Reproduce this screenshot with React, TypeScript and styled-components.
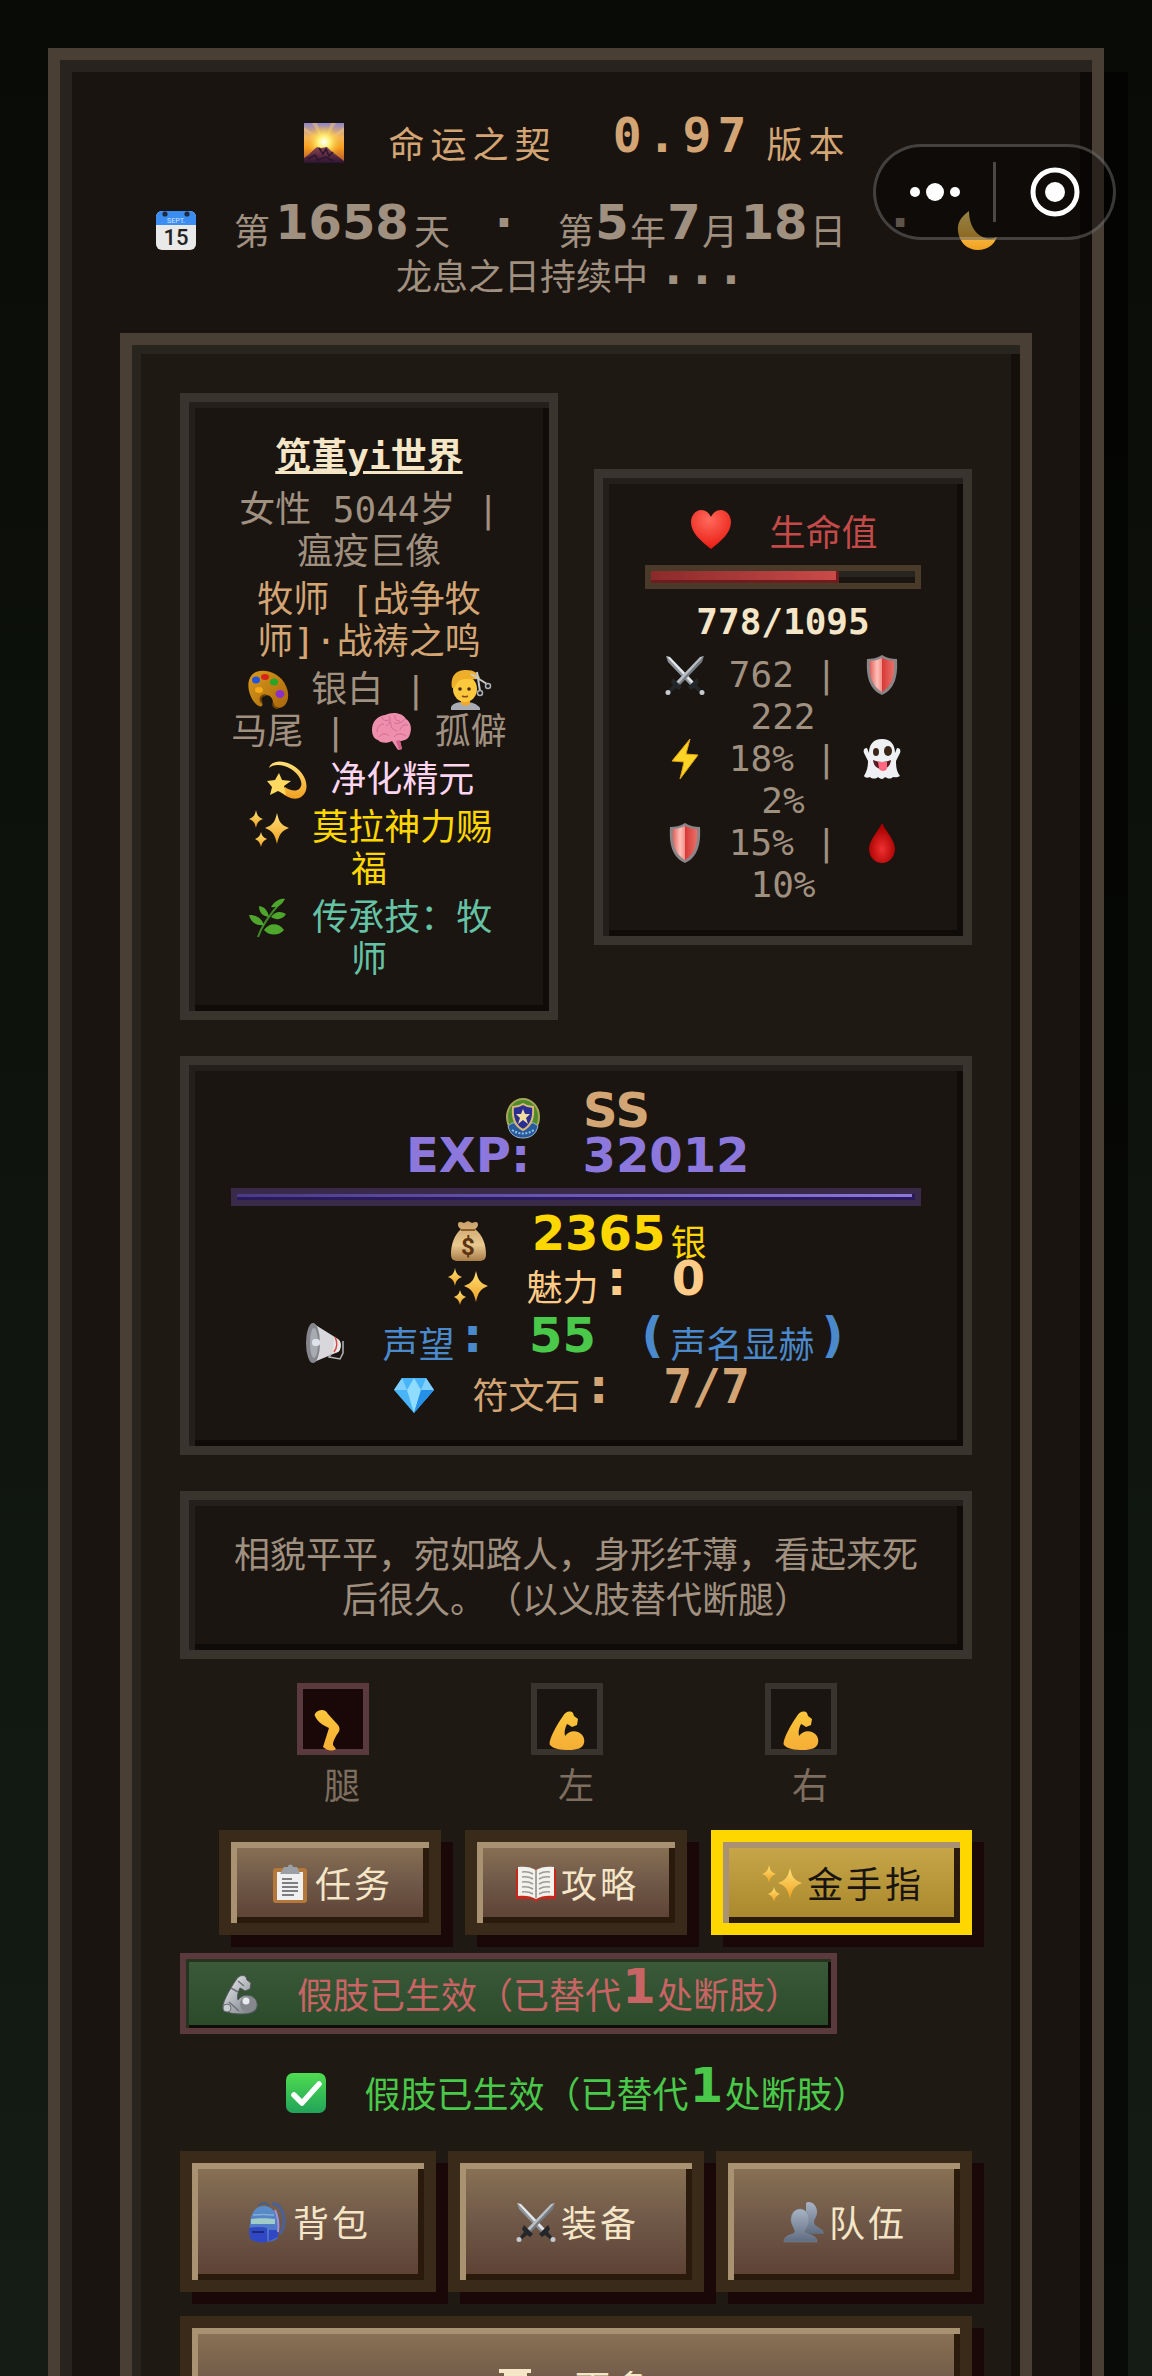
import React from "react";
import styled, { createGlobalStyle } from "styled-components";

const GlobalStyle = createGlobalStyle`
  * { box-sizing: border-box; }
  html, body { margin: 0; background: #0a0d08; }
`;

const CJK = `"Noto Sans CJK SC", "Noto Sans", sans-serif`;
const MONO = `"DejaVu Sans Mono", "Noto Sans CJK SC", monospace`;

/* ---------- frame ---------- */

const Page = styled.div`
  height: 100vh;
  overflow: hidden;
  padding: 48px;
  background: linear-gradient(#090b07, #151c15);
  font-family: ${CJK};
  font-size: 36px;
  line-height: 45px;
  text-spacing-trim: space-all;
`;

const Frame = styled.main`
  border: 12px solid #4a3f35;
  padding: 60px 60px 120px;
  background: #1a1411;
  box-shadow: inset 12px 12px 0 #28231f, inset -12px -12px 0 #0e0a08, 24px 24px 0 rgba(0, 0, 0, 0.6);
`;

const Header = styled.header`
  display: flex;
  flex-direction: column;
  color: #a09080;
  margin-bottom: 36px;
`;

const Title = styled.h1`
  margin: 0 0 42px;
  height: 45px;
  display: flex;
  justify-content: center;
  gap: 42px;
  font-size: 36px;
  font-weight: 400;
  letter-spacing: 6px;
  color: #d4a574;
  white-space: nowrap;
`;

const Panel = styled.section`
  border: 12px solid #4a3f35;
  padding: 48px;
  background: #1e1913;
  box-shadow: inset 9px 9px 0 #28241e, inset -9px -9px 0 #13100b;
`;

const Card = styled.section`
  border: 9px solid #3a342e;
  padding: 30px 42px;
  background: #1a1510;
  box-shadow: inset 6px 6px 0 #241f1a, inset -6px -6px 0 #0e0b08;
`;

const Stack = styled.div`
  display: flex;
  flex-direction: column;
  gap: 36px;
`;

const Pair = styled.div`
  display: grid;
  grid-template-columns: 1fr 1fr;
  gap: 36px;
  align-items: center;
`;

/* ---------- text ---------- */

const Line = styled.div<{ $color?: string; $top?: number }>`
  display: flex;
  justify-content: center;
  gap: 36px;
  height: 45px;
  margin-top: ${(p) => p.$top ?? 0}px;
  color: ${(p) => p.$color ?? "inherit"};
  white-space: nowrap;
`;

const Px = styled.span<{ $cells: number; $cell?: number; $mono?: boolean; $color?: string }>`
  display: inline-block;
  min-width: ${(p) => p.$cells * (p.$cell ?? 36)}px;
  text-align: center;
  vertical-align: 6px;
  font-family: ${(p) => (p.$mono ? `"DejaVu Sans Mono"` : `"DejaVu Sans"`)}, sans-serif;
  font-weight: 700;
  font-size: 48px;
  line-height: 30px;
  color: ${(p) => p.$color ?? "inherit"};
`;

const MonoBlock = styled.div<{ $color?: string; $bold?: boolean }>`
  margin: ${(p) => (p.$bold ? "4px 0 11px" : "6px 0 0")};
  font-family: ${MONO};
  font-weight: ${(p) => (p.$bold ? 700 : 400)};
  line-height: 42px;
  text-align: center;
  white-space: nowrap;
  color: ${(p) => p.$color ?? "#a09080"};
`;

const MonoLine = styled.div`
  height: 42px;
`;

const NameLink = styled.a`
  color: inherit;
  text-decoration: underline;
  text-decoration-thickness: 3px;
`;

const Description = styled.p`
  margin: 0;
  text-align: center;
  color: #a09080;
`;

/* ---------- bars ---------- */

const Track = styled.div<{ $thick: number; $border: string; $top: number; $bottom: number }>`
  height: ${(p) => p.$thick + 12}px;
  margin: ${(p) => p.$top}px 0 ${(p) => p.$bottom}px;
  border: 6px solid ${(p) => p.$border};
  background: linear-gradient(#28241f 50%, #1a1510 50%);
`;

const Fill = styled.div<{ $from: string; $to: string; $edge: string }>`
  height: 100%;
  background: linear-gradient(90deg, ${(p) => p.$from}, ${(p) => p.$to});
  box-shadow: inset -3px -3px 0 ${(p) => p.$edge};
`;

/* ---------- limbs ---------- */

const Limbs = styled.div`
  display: flex;
  justify-content: center;
  gap: 36px;
  margin: 24px 0;
`;

const Limb = styled.div`
  width: 198px;
  display: flex;
  flex-direction: column;
  align-items: center;
  gap: 6px;
  color: #7d6e60;
`;

const LimbBox = styled.div<{ $hurt?: boolean }>`
  width: 72px;
  height: 72px;
  margin-right: 18px;
  padding: 20px 0 0 6px;
  line-height: 0;
  border: 6px solid ${(p) => (p.$hurt ? "#5a3a3c" : "#3a342e")};
  background: ${(p) => (p.$hurt ? "#1a0808" : "#1a1510")};
`;

/* ---------- buttons ---------- */

const Button = styled.button<{ $gold?: boolean; $tall?: boolean }>`
  appearance: none;
  display: flex;
  align-items: center;
  justify-content: center;
  gap: 3px;
  margin: 0;
  padding: ${(p) => (p.$tall ? 36 : 18)}px 36px;
  border: 12px solid ${(p) => (p.$gold ? "#ffd700" : "#3a2a1a")};
  border-radius: 0;
  background: ${(p) => (p.$gold ? "linear-gradient(#c8a84b, #a8872a)" : "linear-gradient(#8b7355, #6f5848 50%, #5c4033)")};
  background-clip: padding-box;
  box-shadow: inset 6px 6px 0 #a99272, inset -6px -6px 0 #2a1a0c, 12px 12px 0 #1a0808;
  font: 400 36px/45px ${CJK};
  letter-spacing: 3px;
  white-space: nowrap;
  color: ${(p) => (p.$gold ? "#1a1410" : "#f5e6c8")};
  cursor: pointer;
`;

const ActionRow = styled.div`
  display: flex;
  justify-content: flex-end;
  gap: 24px;
`;

const MenuGrid = styled.div`
  display: grid;
  grid-template-columns: repeat(3, 1fr);
  gap: 24px 12px;
`;

const Wide = styled.div`
  grid-column: 1 / -1;
  display: grid;
`;

const MoreMark = styled.span`
  margin-right: 36px;
  line-height: 0;
`;

const Banner = styled.div`
  display: flex;
  gap: 36px;
  width: fit-content;
  margin: 18px 0 36px;
  padding: 12px 30px;
  border: 6px solid #5a3a3c;
  background: linear-gradient(#3a5a3a, #2a4a2a);
  box-shadow: inset 3px 3px 0 #28331f, inset -3px -3px 0 #100c08;
  color: #c86464;
  white-space: nowrap;
`;

const Notice = styled(Line)`
  margin-bottom: 36px;
  color: #4ac84a;
`;

/* ---------- capsule ---------- */

const Capsule = styled.nav`
  position: fixed;
  top: 144px;
  right: 36px;
  width: 243px;
  height: 96px;
  display: grid;
  grid-template-columns: 1fr 3px 1fr;
  align-items: center;
  border: 3px solid rgba(255, 255, 255, 0.22);
  border-radius: 48px;
  background: rgba(0, 0, 0, 0.42);
`;

const CapsuleButton = styled.button`
  appearance: none;
  height: 100%;
  padding: 0;
  border: 0;
  background: none;
  display: flex;
  align-items: center;
  justify-content: center;
  cursor: pointer;
`;

const Divider = styled.span`
  height: 60px;
  background: rgba(255, 255, 255, 0.25);
`;

/* ---------- icons ---------- */

const Glyph = styled.svg`
  width: 45px;
  height: 42px;
  flex: none;
  vertical-align: -9px;
`;

const Flex = styled.span`
  display: inline-flex;
  align-items: center;
  height: 45px;
`;

const Defs = () => (
  <svg width="0" height="0" style={{ display: "block" }} aria-hidden="true">
    <defs>
      <linearGradient id="sky" x1="0" y1="0" x2="0" y2="1">
        <stop offset="0" stopColor="#8f86c9" />
        <stop offset=".35" stopColor="#f5b65a" />
        <stop offset=".6" stopColor="#f7a020" />
        <stop offset="1" stopColor="#b05030" />
      </linearGradient>
      <radialGradient id="sun">
        <stop offset="0" stopColor="#fff" />
        <stop offset=".35" stopColor="#fff27a" />
        <stop offset="1" stopColor="#fbbf2a" stopOpacity="0" />
      </radialGradient>
      <linearGradient id="mount" x1="0" y1="0" x2="0" y2="1">
        <stop offset="0" stopColor="#8a4552" />
        <stop offset="1" stopColor="#2d1430" />
      </linearGradient>
      <linearGradient id="gold" x1="0" y1="0" x2="0" y2="1">
        <stop offset="0" stopColor="#ffe27a" />
        <stop offset="1" stopColor="#f0a020" />
      </linearGradient>
      <linearGradient id="skin" x1="0" y1="0" x2="0" y2="1">
        <stop offset="0" stopColor="#fbc63c" />
        <stop offset="1" stopColor="#f5ae35" />
      </linearGradient>
      <linearGradient id="wood" x1="0" y1="0" x2="1" y2="1">
        <stop offset="0" stopColor="#d99a1c" />
        <stop offset="1" stopColor="#a8660a" />
      </linearGradient>
      <radialGradient id="heart" cx=".45" cy=".25" r=".8">
        <stop offset="0" stopColor="#ff6a5c" />
        <stop offset="1" stopColor="#e8160e" />
      </radialGradient>
      <radialGradient id="blood" cx=".5" cy=".65" r=".55">
        <stop offset="0" stopColor="#f03030" />
        <stop offset="1" stopColor="#a80000" />
      </radialGradient>
      <linearGradient id="shield" x1="0" y1="0" x2="1" y2="0">
        <stop offset="0" stopColor="#e0605a" />
        <stop offset=".3" stopColor="#ffc0b8" />
        <stop offset=".5" stopColor="#f09088" />
        <stop offset=".52" stopColor="#d83a38" />
        <stop offset="1" stopColor="#e87068" />
      </linearGradient>
      <linearGradient id="steel" x1="0" y1="0" x2="1" y2="1">
        <stop offset="0" stopColor="#f0f2f4" />
        <stop offset="1" stopColor="#6f757b" />
      </linearGradient>
      <linearGradient id="bag" x1="0" y1="0" x2="0" y2="1">
        <stop offset="0" stopColor="#c9a06a" />
        <stop offset=".6" stopColor="#e8c98f" />
        <stop offset="1" stopColor="#a87c48" />
      </linearGradient>
      <linearGradient id="check" x1="0" y1="0" x2="0" y2="1">
        <stop offset="0" stopColor="#4fdc50" />
        <stop offset="1" stopColor="#22a35a" />
      </linearGradient>
      <linearGradient id="pack" x1="0" y1="0" x2="0" y2="1">
        <stop offset="0" stopColor="#5a8fc8" />
        <stop offset="1" stopColor="#4a68c8" />
      </linearGradient>
      <linearGradient id="bust" x1="0" y1="0" x2="0" y2="1">
        <stop offset="0" stopColor="#a8b4c4" />
        <stop offset="1" stopColor="#5f6b80" />
      </linearGradient>
    </defs>
  </svg>
);

const armPath =
  "M17 6c2-4 7-6 10-3l1 3 4 3-1 6-5 2-3-2-2-1c-2 4-3 8-2 12 3-4 8-6 13-4 5 2 7 7 6 11-1 5-7 7-15 7-8 0-16-1-19-5-2-4 6-19 13-29z";

const art: Record<string, React.ReactNode> = {
  sunset: (
    <>
      <rect width="40" height="40" fill="url(#sky)" />
      <path d="M20 19 0 8V4zM20 19 8 0h5zM20 19 27 0h5zM20 19 40 4v5z" fill="#f8c870" opacity=".5" />
      <circle cx="20" cy="19" r="17" fill="url(#sun)" />
      <path d="M0 35c5-3 9-8 13-11l4 1 6-1 4 4 13 10v2H0z" fill="url(#mount)" />
      <path d="M15 25l4 6 3-5 3 7 4-4M4 36l7-4 3 5 8-3 7 4" stroke="#2d1430" strokeWidth="1.5" fill="none" />
    </>
  ),
  calendar: (
    <>
      <rect y="1" width="40" height="39" rx="6" fill="#e9e9ea" />
      <path d="M0 15V7a6 6 0 0 1 6-6h28a6 6 0 0 1 6 6v8z" fill="#3b8df2" />
      <circle cx="9" cy="4" r="2.6" fill="#1b2a3d" />
      <circle cx="31" cy="4" r="2.6" fill="#1b2a3d" />
      <text x="20" y="13" textAnchor="middle" fontSize="7" fontFamily="Roboto" fill="#cfe4ff">SEPT.</text>
      <text x="20" y="35" textAnchor="middle" fontSize="22" fontWeight="500" fontFamily="Roboto" fill="#222">15</text>
    </>
  ),
  moon: <path d="M12 1C5 6 0 12 1 21c1 11 9 19 20 19 9 0 16-5 19-13-14 6-28-6-28-26z" fill="url(#gold)" />,
  palette: (
    <>
      <path d="M8 2C18-2 33 4 38 16c5 11 1 22-8 22-4 0-5-2-5-5 0-5-3-8-7-8-5 0-7 4-4 8 2 4-3 5-7 0C-1 24-3 7 8 2z" fill="url(#wood)" />
      <path d="M18 25c-5 0-7 4-4 8M30 38c-4 0-5-2-5-5" stroke="#6e4408" strokeWidth="2" fill="none" />
      <ellipse cx="8" cy="10" rx="4" ry="3.5" fill="#2455d8" />
      <ellipse cx="17" cy="7" rx="4" ry="3" fill="#d82418" />
      <ellipse cx="26" cy="12" rx="4" ry="3.5" fill="#28a428" />
      <ellipse cx="11" cy="20" rx="4" ry="3" fill="#f5a818" />
      <ellipse cx="32" cy="24" rx="4.5" ry="4" fill="#8a30c8" />
    </>
  ),
  haircut: (
    <>
      <path d="M0 40v-3c2-4 7-5 14-5s12 2 15 6v2z" fill="#a9adb3" />
      <path d="M10 27h9v7c-2 2-7 2-9 0z" fill="#f0a828" />
      <ellipse cx="14" cy="19" rx="12" ry="13" fill="#fcc93e" />
      <path d="M1 18C-1 5 6 0 15 0c8 0 12 3 14 8-3 2-9 1-14 1-5 0-9 2-11 8z" fill="#eeb02a" />
      <circle cx="9" cy="19" r="1.8" fill="#4a2a10" />
      <circle cx="18" cy="19" r="1.8" fill="#4a2a10" />
      <path d="M11 26q3 1.600 6 0" stroke="#8a4a10" strokeWidth="1.500" fill="none" />
      <path d="M20 4 36 14M29 21 26 2" stroke="#c5cad0" strokeWidth="2" />
      <circle cx="37" cy="16" r="2.500" fill="none" stroke="#a9b0b8" strokeWidth="1.500" />
      <circle cx="29" cy="23" r="2.500" fill="none" stroke="#a9b0b8" strokeWidth="1.500" />
    </>
  ),
  brain: (
    <>
      <path d="M1 18C1 9 7 4 14 3c8-4 18-2 21 4 5 3 6 10 4 15-1 5-6 7-10 7l2 8-4 1-6-9c-5 3-12 2-14-1-4-1-6-5-6-10z" fill="#ee8fae" />
      <path d="M6 20c0-5 3-8 7-8M11 5c1 4 4 4 7 3m0-4c2 4 1 8-3 10m9-11c-1 4 2 6 5 6m5-2c-3 4-7 5-11 4m14 2c-4-1-7 1-8 5m-9-8c-1 5 2 8 6 9M8 25c3-4 7-4 10-1m17 0c-4-3-9-3-12 1" stroke="#cf6d92" strokeWidth="1" fill="none" />
      <path d="M25 29l4-1 2 9-3 1z" fill="#d0608a" />
    </>
  ),
  dizzy: (
    <>
      <path d="M2 8C5-2 22 0 32 10c10 10 10 24 0 28-6 2-13-1-18-6l4-5c5 4 12 5 15 1 4-5-1-14-9-19C16 4 6 4 2 8z" fill="url(#gold)" />
      <path d="M12 13l3 7 9 1-7 5 2 9-8-4-8 4 2-8-5-6 8-1z" fill="#ffd960" />
    </>
  ),
  sparkles: (
    <g fill="url(#gold)">
      <path d="M28 5c2 9 4 12 12 15-8 3-10 7-12 16-2-9-4-13-12-16 8-3 10-6 12-15z" />
      <path d="M7 2c1 5 2 7 7 9-5 2-6 4-7 9-1-5-2-7-7-9 5-2 6-4 7-9z" />
      <path d="M12 24c1 4 2 5 6 7-4 2-5 4-6 8-1-4-2-6-6-8 4-2 5-3 6-7z" />
    </g>
  ),
  herb: (
    <>
      <path d="M9 39C13 27 22 15 32 4" stroke="#3f8a28" strokeWidth="2" fill="none" />
      <g fill="#4fa62c">
        <path d="M36 1c-3-1-10 1-14 8 6 1 11-2 14-8zM10 8c6 1 9 5 10 11-7-1-10-5-10-11zM0 17c8 0 13 4 15 10-7 1-13-2-15-10zM22 19c4-6 10-6 15-3-3 5-9 7-15 3zM15 32c5-7 14-8 20 0-5 6-15 6-20 0z" />
      </g>
    </>
  ),
  heart: <path d="M20 39C10 31 0 23 0 12 0 5 5 0 10 0c5 0 8 3 10 7 2-4 5-7 10-7 5 0 10 5 10 12 0 11-10 19-20 27z" fill="url(#heart)" />,
  swords: (
    <>
      <path d="M1 1l4 1 24 25-3 3z" fill="#e4e7ea" />
      <path d="M1 1l2 6 22 23 2-1z" fill="#8d949b" />
      <path d="M39 1l-4 1L11 27l3 3z" fill="#b9bfc5" />
      <path d="M39 1l-2 6-22 23-2-1z" fill="#747b82" />
      <path d="M23 32l9-9 2 4-2 3 5 6-2 2-6-5-3 2zM17 32l-9-9-2 4 2 3-5 6 2 2 6-5 3 2z" fill="#24272a" />
      <circle cx="37" cy="37.500" r="2.500" fill="#c5cacf" />
      <circle cx="3" cy="37.500" r="2.500" fill="#c5cacf" />
    </>
  ),
  shield: (
    <>
      <path d="M20 0c5 3 10 4 15 4 1 17-2 30-15 36C7 34 4 21 5 4c5 0 10-1 15-4z" fill="#8b8588" />
      <path d="M20 3c4 2 8 3 12 3 1 15-2 25-12 31C10 31 7 21 8 6c4 0 8-1 12-3z" fill="url(#shield)" />
    </>
  ),
  bolt: <path d="M25 0 7 22l12 1-4 17 18-24-12-1z" fill="#ffd426" stroke="#e0a010" strokeWidth="1" />,
  ghost: (
    <>
      <path d="M20 0c9 0 13 6 13 14l2-5c3 0 4 2 3 5l-4 8c0 7 1 11 4 15-3 2-5 1-7 1-3 3-6 1-8 0-2 3-5 2-7 0-2 2-6 2-8 0-2 1-5 1-6-1 3-5 4-9 4-15l-4-8c-1-3 0-5 3-5l2 5C7 6 11 0 20 0z" fill="#eef0f4" />
      <ellipse cx="14" cy="13" rx="3" ry="4" fill="#3a2416" />
      <ellipse cx="26" cy="12" rx="4" ry="5" fill="#3a2416" />
      <path d="M11 21q9 4 18 0-1 9-9 9t-9-9z" fill="#5a1a20" />
      <path d="M16 23h9v6c0 4-8 4-8 0z" fill="#ff6a80" />
    </>
  ),
  drop: <path d="M20 0c4 9 13 17 13 26 0 8-6 14-13 14S7 34 7 26C7 17 16 9 20 0z" fill="url(#blood)" />,
  badge: (
    <>
      <ellipse cx="20" cy="19" rx="16" ry="18" fill="#4f8a28" stroke="#a8a45a" strokeWidth="2" />
      <path d="M5 28c2 9 8 12 15 12s13-3 15-12l-4-3H9z" fill="#285a9c" stroke="#9fb4c8" strokeWidth="1" />
      <path d="M10 9c5 0 7-1 10-3 3 2 5 3 10 3 1 11-2 19-10 23C12 28 9 20 10 9z" fill="#2a2e94" stroke="#d8b878" strokeWidth="2" />
      <path d="M20 11l2 5h5l-4 4 2 6-5-4-5 4 2-6-4-4h5z" fill="#f4dca0" />
      <path d="M9 32q11 7 22 0" stroke="#8fc0e8" strokeWidth="2" strokeDasharray="2 1.500" fill="none" />
    </>
  ),
  money: (
    <>
      <path d="M13 8C9 6 9 0 13 1l3 1 4-2 4 2 3-1c4-1 4 5 0 7 8 6 11 16 11 25 0 5-2 7-7 7H10c-5 0-7-2-7-7 0-9 3-19 10-25z" fill="url(#bag)" />
      <path d="M13 9h14" stroke="#8a5f2c" strokeWidth="2" />
      <text x="20" y="34" textAnchor="middle" fontSize="24" fontWeight="700" fontFamily="Roboto" fill="#5c3410">$</text>
    </>
  ),
  horn: (
    <>
      <path d="M10 1 34 16c4 3 3 12 0 13L10 39z" fill="#d7d7dc" />
      <path d="M30 14l5 3c3 3 2 10-1 12l-5 1z" fill="#e8e8ec" />
      <path d="M31 14q4 8-1 15" stroke="#d84a40" strokeWidth="1.500" fill="none" />
      <path d="M27 31l-2 3 11 2 3-6V18" stroke="#b5b5ba" strokeWidth="1.500" fill="none" />
      <ellipse cx="9" cy="20" rx="7" ry="20" fill="#84868c" />
      <ellipse cx="10" cy="20" rx="4" ry="15" fill="#a9abb3" />
      <rect x="8" y="16" width="8" height="7" rx="3" fill="#dfe2ea" />
    </>
  ),
  gem: (
    <>
      <path d="M8 4h24l8 12-20 23L0 16z" fill="#4ab4f8" />
      <path d="M8 4l5 12H0zM32 4l-5 12h13z" fill="#7fd0ff" />
      <path d="M13 16 20 4l7 12-7 23z" fill="#8fdcff" />
      <path d="M27 16h13L20 39z" fill="#2590e8" />
    </>
  ),
  leg: <path d="M6 1c4-2 8-1 10 3l10 11c2 3 2 5 0 8-4 6-5 9-5 12l3 4c-4 3-10 1-13-2l6-19C10 15 5 11 3 6c-1-2 1-4 3-5z" fill="url(#skin)" />,
  arm: <path d={armPath} fill="url(#skin)" />,
  metalArm: (
    <>
      <path d={armPath} fill="url(#steel)" stroke="#50565c" strokeWidth="1" />
      <circle cx="29" cy="30" r="8" fill="#85898e" />
      <circle cx="27" cy="27" r="3.500" fill="#e9ecef" />
      <circle cx="8" cy="34" r="4" fill="#c9cdd1" stroke="#666b70" />
      <path d="M12 14l7 4M19 7l6 5M10 28l10 9" stroke="#6b7177" strokeWidth="1.500" />
    </>
  ),
  clipboard: (
    <>
      <rect x="3" y="5" width="34" height="35" rx="3" fill="#b4783a" />
      <path d="M7 9h26v28H7z" fill="#f0f0f0" />
      <path d="M14 4h4a2.500 2.500 0 0 1 5 0h4l3 7H10z" fill="#9aa0a6" />
      <path d="M12 16h10M12 20h16M12 24h16M12 28h16M12 32h12" stroke="#55585c" strokeWidth="1.500" />
    </>
  ),
  book: (
    <>
      <path d="M0 6h40v30H24l-4 3-4-3H0z" fill="#c8281c" />
      <path d="M2 4c7-1 13 0 18 3 5-3 11-4 18-3v29c-7-1-13 0-18 3-5-3-11-4-18-3z" fill="#f3f1ec" />
      <path d="M20 7v28" stroke="#8d8a84" strokeWidth="1.500" />
      <path d="M6 9q6-1 11 2M6 14q6-1 11 2M6 19q6-1 11 2M6 24q6-1 11 2M6 29q6-1 11 2M34 9q-6-1-11 2M34 14q-6-1-11 2M34 19q-6-1-11 2M34 24q-6-1-11 2M34 29q-6-1-11 2" stroke="#9d9a95" strokeWidth="1.500" fill="none" />
    </>
  ),
  check: (
    <>
      <rect width="40" height="40" rx="7" fill="url(#check)" />
      <path d="M8 22l8 8 17-19" stroke="#fff" strokeWidth="5.500" strokeLinecap="round" strokeLinejoin="round" fill="none" />
    </>
  ),
  pack: (
    <>
      <path d="M11 4c2-4 8-4 10 0" stroke="#4a5f88" strokeWidth="2" fill="none" />
      <path d="M24 2c7-1 11 6 12 16 0 6-1 10-4 14" stroke="#4a6098" strokeWidth="3" fill="none" />
      <path d="M2 36C1 24 2 14 6 9c4-6 14-7 19-1 5 6 6 16 5 28-4 5-23 6-28 0z" fill="url(#pack)" />
      <path d="M3 17c8-1 17-1 24 0v5H3z" fill="#a0ccc8" />
      <path d="M5 13q10-1 21 0" stroke="#82b0d0" strokeWidth="1.500" fill="none" />
      <path d="M1 26q9-2 18 0v14c-6 1-12 0-17-3zM21 28h9v7l-9 4z" fill="#3148c4" />
      <path d="M4 30h12" stroke="#18205c" strokeWidth="1.500" />
      <path d="M27 8c3 6 4 14 3 22" stroke="#a090e0" strokeWidth="2" fill="none" />
    </>
  ),
  team: (
    <>
      <path d="M24 0c6 0 9 5 9 10 0 5-3 7-3 10 0 6 10 5 10 12H22V1z" fill="url(#bust)" />
      <path d="M16 7c6 0 9 5 9 11 0 5-4 8-4 12 1 3 11 2 12 9v1H0v-1c1-7 10-6 11-9 0-4-4-7-4-12 0-6 3-11 9-11z" fill="url(#bust)" stroke="#7c8898" strokeWidth=".5" />
    </>
  ),
};

const Icon = ({ name }: { name: string }) => (
  <Glyph viewBox="-3 -1 45 42" aria-hidden="true">
    {art[name]}
  </Glyph>
);

const LineIcon = ({ name }: { name: string }) => (
  <Flex>
    <Icon name={name} />
  </Flex>
);

/* ---------- sections ---------- */

const ProfileCard = () => (
  <Card>
    <MonoBlock $bold $color="#f5e6c8">
      <NameLink href="#profile">笕堇yi世界</NameLink>
    </MonoBlock>
    <MonoBlock>
      <MonoLine>女性 5044岁 |</MonoLine>
      <MonoLine>瘟疫巨像</MonoLine>
    </MonoBlock>
    <MonoBlock $color="#d4a574">
      <MonoLine>牧师 [战争牧</MonoLine>
      <MonoLine>师]·战祷之鸣</MonoLine>
    </MonoBlock>
    <MonoBlock>
      <MonoLine><Icon name="palette" /> 银白 | <Icon name="haircut" /></MonoLine>
      <MonoLine>马尾 | <Icon name="brain" /> 孤僻</MonoLine>
    </MonoBlock>
    <MonoBlock $color="#ffd6f0">
      <MonoLine><Icon name="dizzy" /> 净化精元</MonoLine>
    </MonoBlock>
    <MonoBlock $color="#ffd700">
      <MonoLine><Icon name="sparkles" /> 莫拉神力赐</MonoLine>
      <MonoLine>福</MonoLine>
    </MonoBlock>
    <MonoBlock $color="#66c2a5">
      <MonoLine><Icon name="herb" /> 传承技：牧</MonoLine>
      <MonoLine>师</MonoLine>
    </MonoBlock>
  </Card>
);

const HealthCard = ({ hp, max }: { hp: number; max: number }) => (
  <Card>
    <Line $color="#c44a4a">
      <LineIcon name="heart" />
      <span>生命值</span>
    </Line>
    <Track $thick={12} $border="#4a3a2a" $top={12} $bottom={12}>
      <Fill $from="#8b2a2a" $to="#cc4a4a" $edge="#6e1c1c" style={{ width: `${(hp / max) * 100}%` }} />
    </Track>
    <MonoBlock $bold $color="#f5e6c8">{hp}/{max}</MonoBlock>
    <MonoBlock>
      <MonoLine><Icon name="swords" /> 762 | <Icon name="shield" /></MonoLine>
      <MonoLine>222</MonoLine>
      <MonoLine><Icon name="bolt" /> 18% | <Icon name="ghost" /></MonoLine>
      <MonoLine>2%</MonoLine>
      <MonoLine><Icon name="shield" /> 15% | <Icon name="drop" /></MonoLine>
      <MonoLine>10%</MonoLine>
    </MonoBlock>
  </Card>
);

const StatsCard = () => (
  <Card>
    <Line $color="#d4a574">
      <LineIcon name="badge" />
      <span><Px $cells={2}>SS</Px></span>
    </Line>
    <Line $color="#8c78dc">
      <span><Px $cells={4}>EXP:</Px></span>
      <span><Px $cells={5}>32012</Px></span>
    </Line>
    <Track $thick={6} $border="#3a2a4a" $top={3} $bottom={12}>
      <Fill $from="#4a3a8a" $to="#8c78dc" $edge="#2a1a5a" style={{ width: "100%" }} />
    </Track>
    <Line $color="#ffd700">
      <LineIcon name="money" />
      <span><Px $cells={4}>2365</Px>银</span>
    </Line>
    <Line $color="#ffcc88">
      <LineIcon name="sparkles" />
      <span>魅力<Px $cells={1}>:</Px></span>
      <span><Px $cells={1}>0</Px></span>
    </Line>
    <Line $color="#4a8acc" $top={12}>
      <LineIcon name="horn" />
      <span>声望<Px $cells={1}>:</Px></span>
      <span><Px $cells={2} $color="#4ac84a">55</Px></span>
      <span><Px $cells={1}>(</Px>声名显赫<Px $cells={1}>)</Px></span>
    </Line>
    <Line $color="#d4a574" $top={6}>
      <LineIcon name="gem" />
      <span>符文石<Px $cells={1}>:</Px></span>
      <span><Px $cells={3} $mono>7/7</Px></span>
    </Line>
  </Card>
);

const limbs = [
  { icon: "leg", label: "腿", hurt: true },
  { icon: "arm", label: "左", hurt: false },
  { icon: "arm", label: "右", hurt: false },
];

const menu = [
  { icon: "pack", label: "背包" },
  { icon: "swords", label: "装备" },
  { icon: "team", label: "队伍" },
];

const Prosthetic = () => (
  <span>假肢已生效（已替代<Px $cells={1}>1</Px>处断肢）</span>
);

export default function App() {
  return (
    <Page lang="zh-CN">
      <GlobalStyle />
      <Defs />
      <Frame>
        <Header>
          <Title>
            <LineIcon name="sunset" />
            <span>命运之契</span>
            <span><Px $cells={4} $cell={42} $mono>0.97</Px>版本</span>
          </Title>
          <Line>
            <LineIcon name="calendar" />
            <span>第<Px $cells={4}>1658</Px>天</span>
            <span><Px $cells={1}>·</Px></span>
            <span>第<Px $cells={1}>5</Px>年<Px $cells={1}>7</Px>月<Px $cells={2}>18</Px>日</span>
            <span><Px $cells={1}>·</Px></span>
            <LineIcon name="moon" />
          </Line>
          <Line>
            <span>龙息之日持续中<Px $cells={3} $mono>...</Px></span>
          </Line>
        </Header>
        <Panel>
          <Stack>
            <Pair>
              <ProfileCard />
              <HealthCard hp={778} max={1095} />
            </Pair>
            <StatsCard />
            <Card>
              <Description>相貌平平，宛如路人，身形纤薄，看起来死后很久。（以义肢替代断腿）</Description>
            </Card>
          </Stack>
          <Limbs>
            {limbs.map((l) => (
              <Limb key={l.label}>
                <LimbBox $hurt={l.hurt}><Icon name={l.icon} /></LimbBox>
                <span>{l.label}</span>
              </Limb>
            ))}
          </Limbs>
          <ActionRow>
            <Button><Icon name="clipboard" />任务</Button>
            <Button><Icon name="book" />攻略</Button>
            <Button $gold><Icon name="sparkles" />金手指</Button>
          </ActionRow>
          <Banner>
            <LineIcon name="metalArm" />
            <Prosthetic />
          </Banner>
          <Notice>
            <LineIcon name="check" />
            <Prosthetic />
          </Notice>
          <MenuGrid>
            {menu.map((m) => (
              <Button key={m.label} $tall><Icon name={m.icon} />{m.label}</Button>
            ))}
            <Wide>
              <Button $tall>
                <MoreMark>
                  <svg width="36" height="36" viewBox="0 0 36 36" aria-hidden="true">
                    <path d="M0 0h32v4h-4v12h-5v9h-5v5h-4v-5H9v-9H5V4H0z" fill="currentColor" />
                  </svg>
                </MoreMark>
                更多
              </Button>
            </Wide>
          </MenuGrid>
        </Panel>
      </Frame>
      <Capsule aria-label="小程序菜单">
        <CapsuleButton aria-label="更多操作">
          <svg width="54" height="24" viewBox="0 0 54 24" fill="#fff">
            <circle cx="7" cy="12" r="5" />
            <circle cx="27" cy="12" r="9" />
            <circle cx="47" cy="12" r="5" />
          </svg>
        </CapsuleButton>
        <Divider />
        <CapsuleButton aria-label="关闭">
          <svg width="54" height="54" viewBox="0 0 54 54">
            <circle cx="27" cy="27" r="22" fill="none" stroke="#fff" strokeWidth="5" />
            <circle cx="27" cy="27" r="10" fill="#fff" />
          </svg>
        </CapsuleButton>
      </Capsule>
    </Page>
  );
}
